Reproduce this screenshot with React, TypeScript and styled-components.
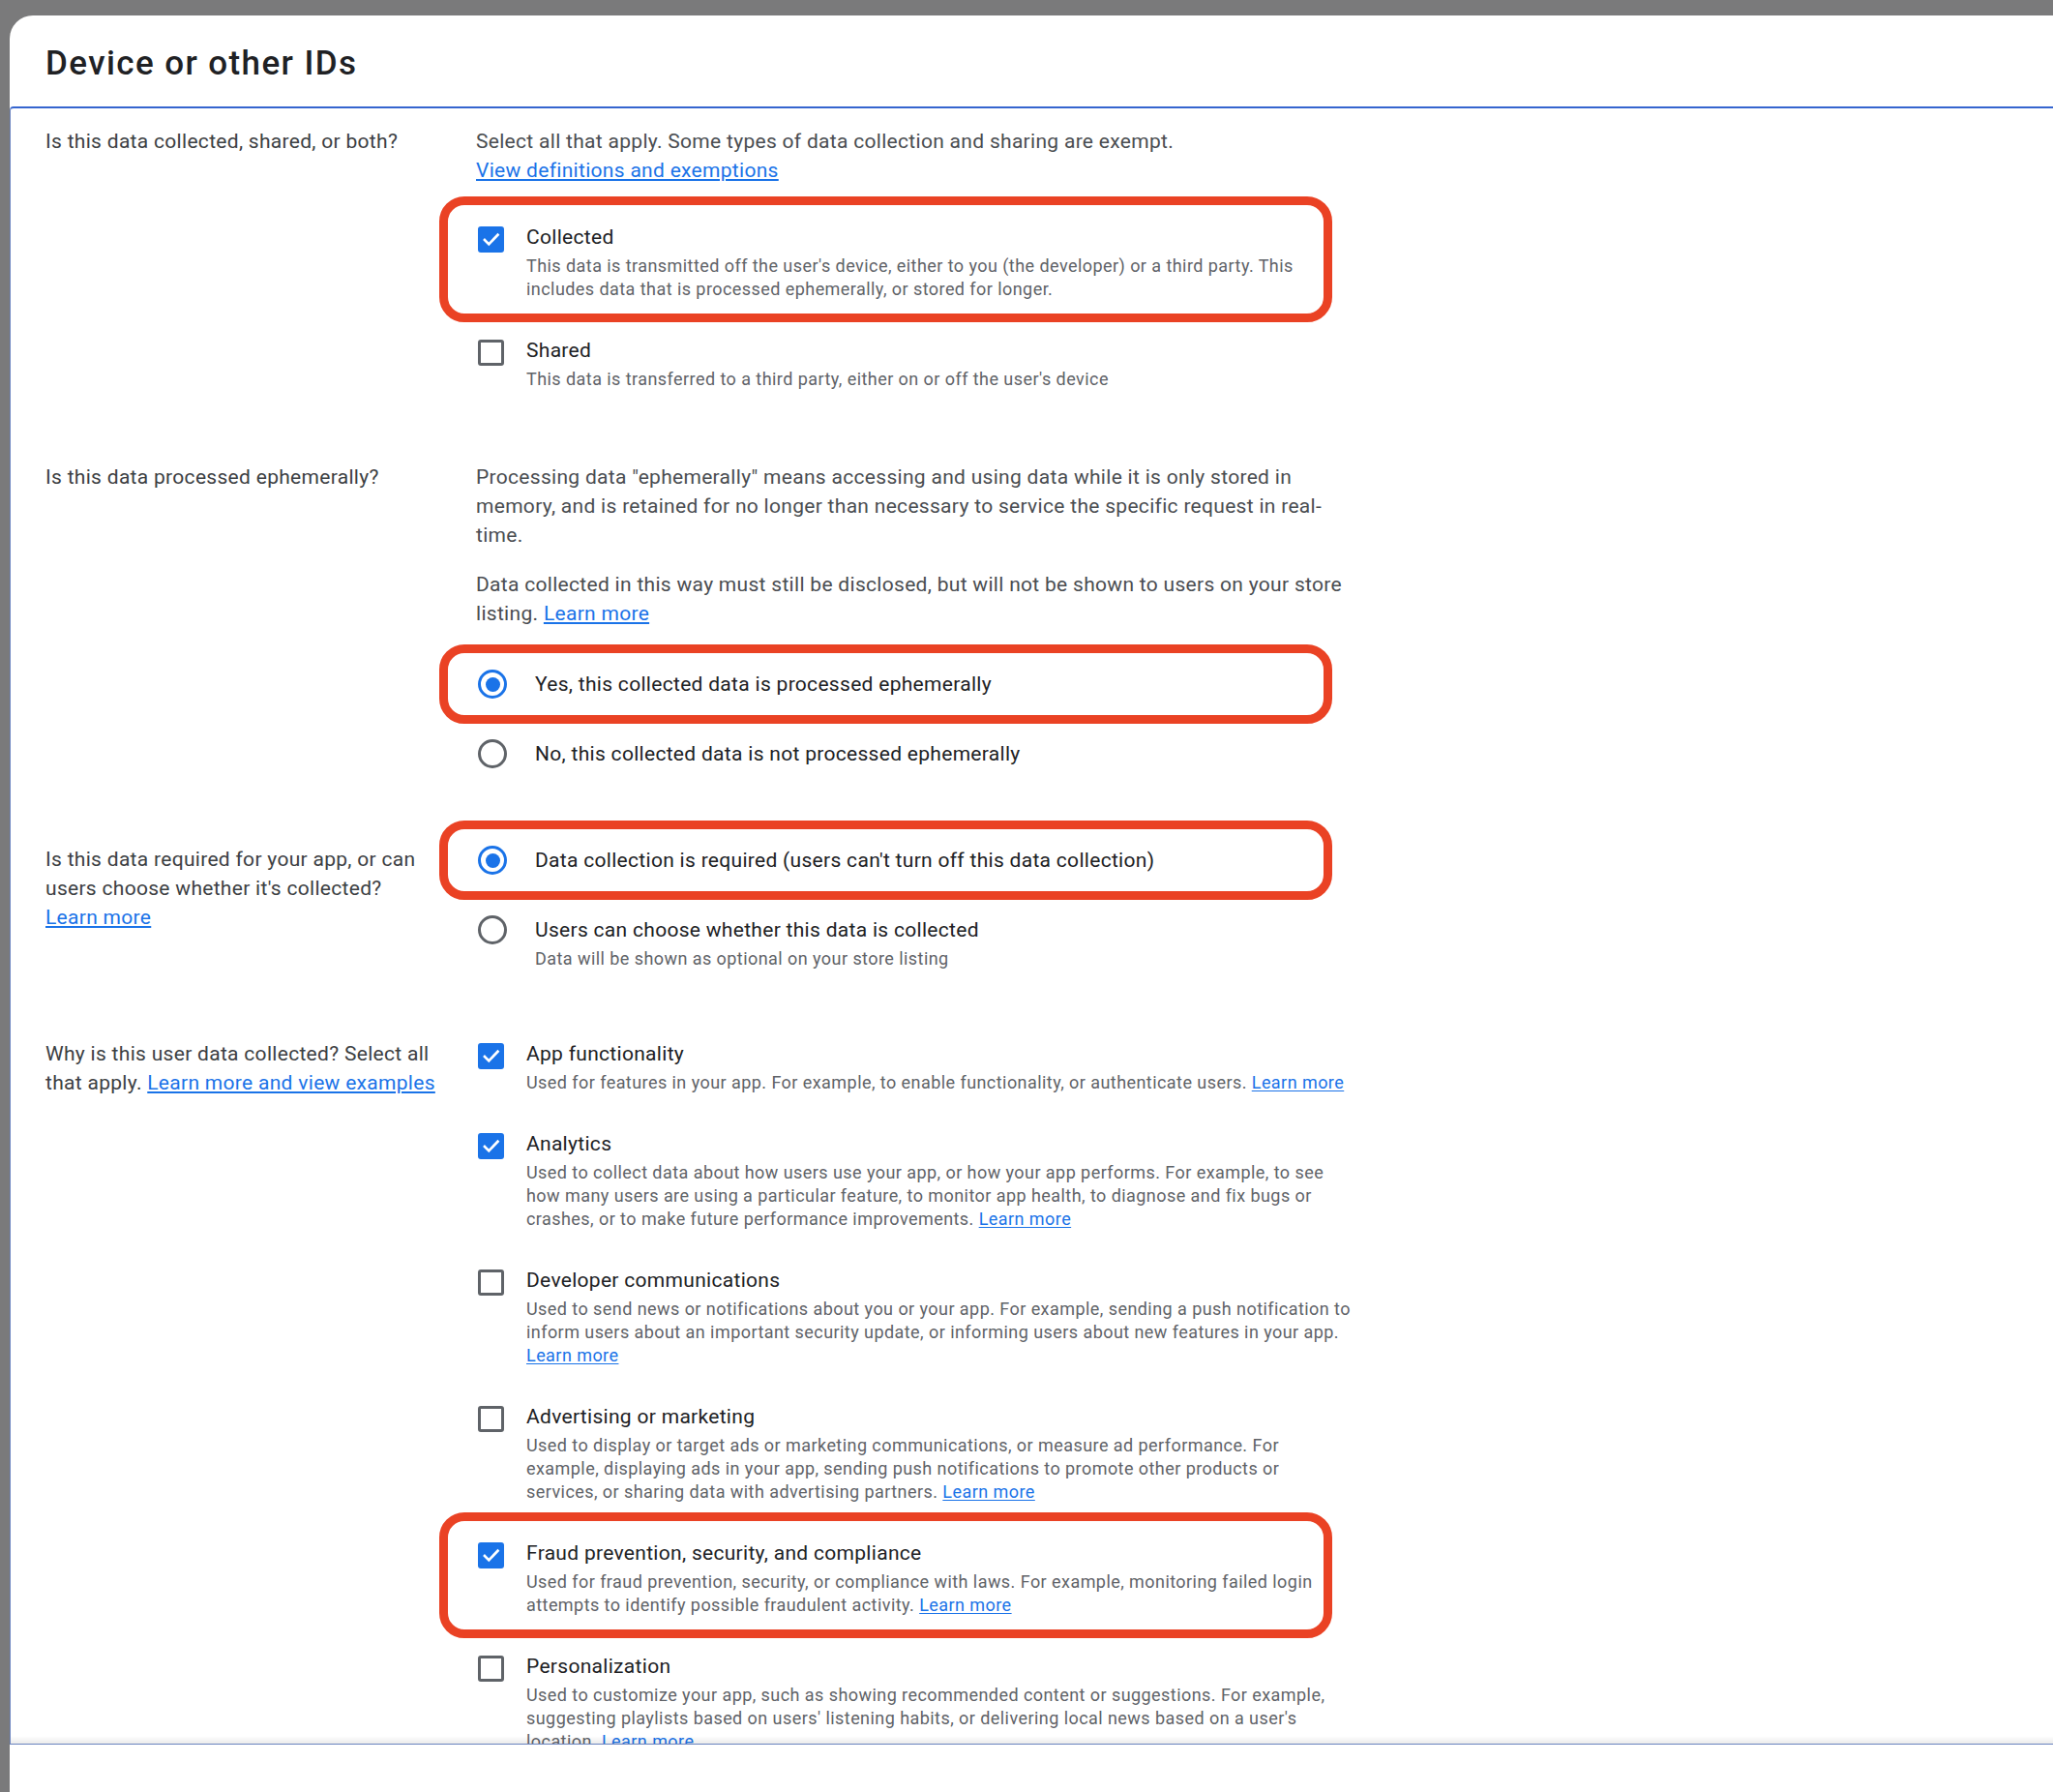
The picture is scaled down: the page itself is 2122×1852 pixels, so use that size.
import styled, { createGlobalStyle } from "styled-components";

const GlobalStyle = createGlobalStyle`
  html, body {
    margin: 0;
    padding: 0;
    overflow: hidden;
    background: #7a7a7b;
  }
  * {
    box-sizing: border-box;
  }
`

const Page = styled.div`
  height: 1852px;
  padding: 16px 0 0 10px;
  background: #7a7a7b;
  font-family: Roboto, "Liberation Sans", sans-serif;
`

const Card = styled.div`
  height: 100%;
  background: #fff;
  border-top-left-radius: 24px;
  display: flex;
  flex-direction: column;
`

const Header = styled.header`
  height: 94px;
  flex-shrink: 0;
  padding: 30px 0 0 37px;
`

const Title = styled.h1`
  margin: 0;
  font-size: 35px;
  line-height: 40px;
  font-weight: 500;
  letter-spacing: 1.4px;
  color: #202124;
`

const Form = styled.div`
  position: relative;
  height: 1693px;
  flex-shrink: 0;
  padding: 19px 0 0 36px;
  border: 1px solid #6a83bf;
  border-top: 2px solid #3565cf;
  border-right: none;
  border-top-left-radius: 4px;
  overflow: hidden;

  &::after {
    content: '';
    position: absolute;
    left: 0;
    right: 0;
    bottom: 0;
    height: 8px;
    background: linear-gradient(to top, rgba(0, 0, 0, 0.08), rgba(0, 0, 0, 0));
  }
`

const Section = styled.section`
  display: grid;
  grid-template-columns: 445px 906px;
  margin-bottom: 38px;
`

const Question = styled.div<{ $offset?: number }>`
  max-width: 425px;
  padding-top: ${props => props.$offset || 0}px;
  font-size: 21px;
  line-height: 30px;
  letter-spacing: 0.3px;
  color: #3c4043;
`

const Paragraph = styled.p`
  margin: 0 0 21px;
  font-size: 21px;
  line-height: 30px;
  letter-spacing: 0.3px;
  color: #4a4d51;

  &:last-of-type {
    margin-bottom: 0;
  }
`

const Link = styled.a<{ $block?: boolean }>`
  display: ${props => (props.$block ? 'block' : 'inline')};
  white-space: nowrap;
  color: #1a73e8;
  text-decoration: underline;
  text-underline-offset: 2px;
  cursor: pointer;
`

const CheckList = styled.div<{ $top?: number }>`
  display: flex;
  flex-direction: column;
  gap: 36px;
  margin-top: ${props => props.$top || 0}px;
  margin-bottom: 36px;
`

const Annotated = styled.div<{ $on?: boolean, $top: number, $bottom: number }>`
  position: relative;

  &::after {
    content: '';
    display: ${props => (props.$on ? 'block' : 'none')};
    position: absolute;
    top: -${props => props.$top}px;
    bottom: -${props => props.$bottom}px;
    left: -38px;
    right: 21px;
    border: 9px solid #ea4224;
    border-radius: 26px;
    pointer-events: none;
  }
`

const CheckItem = styled.label`
  display: grid;
  grid-template-columns: 52px 1fr;
  cursor: pointer;
`

const Box = styled.span<{ $checked: boolean }>`
  width: 27px;
  height: 27px;
  margin: 4px 0 0 2px;
  border-radius: 3px;
  border: 3px solid ${props => (props.$checked ? '#1a73e8' : '#5f6368')};
  background: ${props => (props.$checked ? '#1a73e8' : '#fff')};
  display: flex;
  align-items: center;
  justify-content: center;
`

const OptionText = styled.div`
  display: flex;
  flex-direction: column;
`

const OptionLabel = styled.span`
  font-size: 21px;
  line-height: 30px;
  letter-spacing: 0.3px;
  color: #202124;
`

const OptionDesc = styled.span`
  margin-top: 3px;
  font-size: 18px;
  line-height: 24px;
  letter-spacing: 0.44px;
  color: #5f6368;
`

const RadioGroup = styled.div<{ $top?: number }>`
  display: flex;
  flex-direction: column;
  margin-top: ${props => props.$top || 0}px;
`

const RadioRow = styled.label<{ $tall?: boolean }>`
  display: grid;
  grid-template-columns: 61px 1fr;
  padding: 21px 0 ${props => (props.$tall ? 33 : 21)}px;
  cursor: pointer;
`

const Radio = styled.span<{ $checked: boolean }>`
  width: 30px;
  height: 30px;
  margin-left: 2px;
  border-radius: 50%;
  border: 3px solid ${props => (props.$checked ? '#1a73e8' : '#5f6368')};
  display: flex;
  align-items: center;
  justify-content: center;

  &::after {
    content: '';
    display: ${props => (props.$checked ? 'block' : 'none')};
    width: 15px;
    height: 15px;
    border-radius: 50%;
    background: #1a73e8;
  }
`

const Check = () => (
  <svg width="21" height="21" viewBox="0 0 24 24">
    <path d="M4.5 12.5l5 5L20 6.5" fill="none" stroke="#fff" strokeWidth="3" strokeLinecap="square" />
  </svg>
)

type CheckProps = {
  label: string,
  checked?: boolean,
  highlight?: boolean,
  children?: React.ReactNode,
}

const CheckOption = ({ label, checked = false, highlight = false, children }: CheckProps) => (
  <Annotated $on={highlight} $top={27} $bottom={22}>
    <CheckItem>
      <Box $checked={checked}>{checked && <Check />}</Box>
      <OptionText>
        <OptionLabel>{label}</OptionLabel>
        <OptionDesc>{children}</OptionDesc>
      </OptionText>
    </CheckItem>
  </Annotated>
)

type RadioProps = {
  label: string,
  checked?: boolean,
  highlight?: boolean,
  desc?: string,
}

const RadioOption = ({ label, checked = false, highlight = false, desc }: RadioProps) => (
  <Annotated $on={highlight} $top={5} $bottom={5}>
    <RadioRow $tall={!!desc}>
      <Radio $checked={checked} />
      <OptionText>
        <OptionLabel>{label}</OptionLabel>
        {desc && <OptionDesc>{desc}</OptionDesc>}
      </OptionText>
    </RadioRow>
  </Annotated>
)

export default function App() {
  return (
    <>
      <GlobalStyle />
      <Page>
        <Card>
          <Header>
            <Title>Device or other IDs</Title>
          </Header>
          <Form>
            <Section>
              <Question>Is this data collected, shared, or both?</Question>
              <div>
                <Paragraph>
                  Select all that apply. Some types of data collection and sharing are exempt.
                  <Link $block>View definitions and exemptions</Link>
                </Paragraph>
                <CheckList $top={39}>
                  <CheckOption label="Collected" checked highlight>
                    This data is transmitted off the user's device, either to you (the developer) or a third party. This includes data that is processed ephemerally, or stored for longer.
                  </CheckOption>
                  <CheckOption label="Shared">
                    This data is transferred to a third party, either on or off the user's device
                  </CheckOption>
                </CheckList>
              </div>
            </Section>

            <Section>
              <Question>Is this data processed ephemerally?</Question>
              <div>
                <Paragraph>
                  Processing data "ephemerally" means accessing and using data while it is only stored in memory, and is retained for no longer than necessary to service the specific request in real-time.
                </Paragraph>
                <Paragraph>
                  Data collected in this way must still be disclosed, but will not be shown to users on your store listing. <Link>Learn more</Link>
                </Paragraph>
                <RadioGroup $top={22}>
                  <RadioOption label="Yes, this collected data is processed ephemerally" checked highlight />
                  <RadioOption label="No, this collected data is not processed ephemerally" />
                </RadioGroup>
              </div>
            </Section>

            <Section>
              <Question $offset={20}>
                Is this data required for your app, or can users choose whether it's collected? <Link>Learn more</Link>
              </Question>
              <RadioGroup>
                <RadioOption label="Data collection is required (users can't turn off this data collection)" checked highlight />
                <RadioOption label="Users can choose whether this data is collected" desc="Data will be shown as optional on your store listing" />
              </RadioGroup>
            </Section>

            <Section>
              <Question>
                Why is this user data collected? Select all that apply. <Link>Learn more and view examples</Link>
              </Question>
              <CheckList>
                <CheckOption label="App functionality" checked>
                  Used for features in your app. For example, to enable functionality, or authenticate users. <Link>Learn more</Link>
                </CheckOption>
                <CheckOption label="Analytics" checked>
                  Used to collect data about how users use your app, or how your app performs. For example, to see how many users are using a particular feature, to monitor app health, to diagnose and fix bugs or crashes, or to make future performance improvements. <Link>Learn more</Link>
                </CheckOption>
                <CheckOption label="Developer communications">
                  Used to send news or notifications about you or your app. For example, sending a push notification to inform users about an important security update, or informing users about new features in your app. <Link>Learn more</Link>
                </CheckOption>
                <CheckOption label="Advertising or marketing">
                  Used to display or target ads or marketing communications, or measure ad performance. For example, displaying ads in your app, sending push notifications to promote other products or services, or sharing data with advertising partners. <Link>Learn more</Link>
                </CheckOption>
                <CheckOption label="Fraud prevention, security, and compliance" checked highlight>
                  Used for fraud prevention, security, or compliance with laws. For example, monitoring failed login attempts to identify possible fraudulent activity. <Link>Learn more</Link>
                </CheckOption>
                <CheckOption label="Personalization">
                  Used to customize your app, such as showing recommended content or suggestions. For example, suggesting playlists based on users' listening habits, or delivering local news based on a user's location. <Link>Learn more</Link>
                </CheckOption>
              </CheckList>
            </Section>
          </Form>
        </Card>
      </Page>
    </>
  );
}
